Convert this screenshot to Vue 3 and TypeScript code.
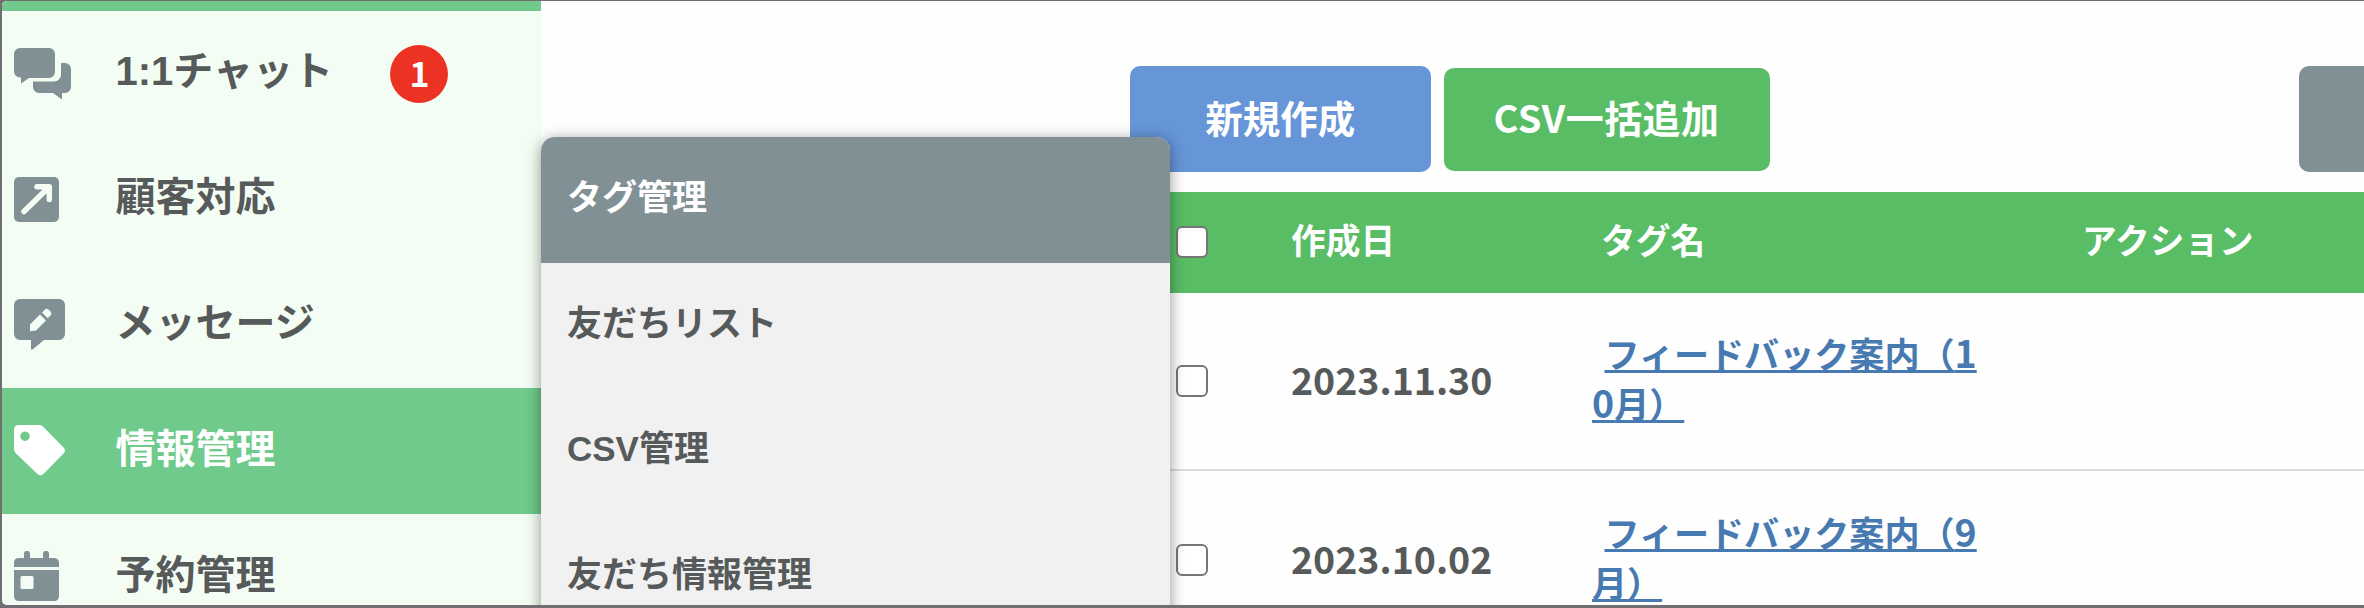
<script setup lang="ts">
type IconName = 'chat' | 'arrow' | 'message' | 'tag' | 'calendar'

interface NavItem {
  icon: IconName
  label: string
  badge?: number
  active?: boolean
}

interface TagRow {
  date: string
  // runs of Japanese text and larger-set numerals
  name: { text: string; digit?: boolean }[]
}

const nav: NavItem[] = [
  { icon: 'chat', label: '1:1チャット', badge: 1 },
  { icon: 'arrow', label: '顧客対応' },
  { icon: 'message', label: 'メッセージ' },
  { icon: 'tag', label: '情報管理', active: true },
  { icon: 'calendar', label: '予約管理' },
]

const submenu: string[] = ['タグ管理', '友だちリスト', 'CSV管理', '友だち情報管理']

const rows: TagRow[] = [
  { date: '2023.11.30', name: [{ text: 'フィードバック案内（' }, { text: '10', digit: true }, { text: '月）' }] },
  { date: '2023.10.02', name: [{ text: 'フィードバック案内（' }, { text: '9', digit: true }, { text: '月）' }] },
]
</script>

<template>
  <div class="frame">
    <div class="app">
      <aside class="sidebar">
        <div class="strip"></div>
        <nav>
          <a v-for="item in nav" :key="item.label" class="nav-item" :class="{ active: item.active }">
            <span class="icon">
              <svg v-if="item.icon === 'chat'" width="58" height="52" viewBox="0 0 58 52">
                <path d="M47 15h4a6 6 0 0 1 6 6v18a6 6 0 0 1-6 6h-3v6.500l-9-6.500H25a6 6 0 0 1-6-6v-5.500h21a7 7 0 0 0 7-7z" />
                <path d="M6 0h29a6 6 0 0 1 6 6v18a6 6 0 0 1-6 6H15L7 35.500V29.500H6A6 6 0 0 1 0 23.500V6a6 6 0 0 1 6-6z" />
              </svg>
              <svg v-else-if="item.icon === 'arrow'" width="46" height="46" viewBox="0 0 46 46">
                <rect width="45" height="45" rx="5" />
                <path class="knock" d="M10 34.500 33 12M23 9.800h12.300v12.700" />
                <path class="knock-fill" d="M27 9h9v9z" />
              </svg>
              <svg v-else-if="item.icon === 'message'" width="52" height="52" viewBox="0 0 52 52">
                <path d="M6 0h39a6 6 0 0 1 6 6v29a6 6 0 0 1-6 6H30L18.500 50.500q-1.500 1-1.500-1V41H6a6 6 0 0 1-6-6V6a6 6 0 0 1 6-6z" />
                <path class="knock-fill" d="M16 25.500 26 15.500l6 6L22 31.500l-6 .7zM28 13.500l3-3q2-1.500 4 .5l1.500 1.500q1.500 2 0 4l-2.800 2.800z" />
              </svg>
              <svg v-else-if="item.icon === 'tag'" width="52" height="52" viewBox="0 0 52 52">
                <path fill-rule="evenodd" d="M5 0h20q2.500 0 4 1.500L50 23q2 2.500 0 5L29.500 49q-3 2.500-6 0L1.500 28Q0 26.500 0 24V5q0-5 5-5zM11 6.500a4.700 4.700 0 1 0 .01 0z" />
              </svg>
              <svg v-else width="46" height="52" viewBox="0 0 46 52">
                <path d="M10 8V2.500Q10 0 12 0h2q2 0 2 2.500V7h13V2.500Q29 0 31 0h2q2 0 2 2.500V7h4.500Q45 7 45 12v4H0v-4Q0 7 5 7h5z" />
                <path fill-rule="evenodd" d="M0 19h45v26q0 5-5 5H5q-5 0-5-5zM8 25q-1.500 0-1.500 1.500v10Q6.500 38 8 38h10q1.500 0 1.500-1.500v-10Q19.500 25 18 25z" />
              </svg>
            </span>
            <span class="label">{{ item.label }}</span>
            <span v-if="item.badge" class="badge">{{ item.badge }}</span>
          </a>
        </nav>
        <ul class="submenu">
          <li v-for="(label, i) in submenu" :key="label" :class="{ current: i === 0 }">{{ label }}</li>
        </ul>
      </aside>

      <main class="content">
        <div class="toolbar">
          <button class="btn create">新規作成</button>
          <button class="btn csv">CSV一括追加</button>
          <button class="btn extra"></button>
        </div>
        <section class="table">
          <div class="row head">
            <span class="check"></span>
            <span>作成日</span>
            <span class="head-name">タグ名</span>
            <span>アクション</span>
          </div>
          <div v-for="row in rows" :key="row.date" class="row body">
            <span class="check"></span>
            <span class="date">{{ row.date }}</span>
            <span class="name"><a><span v-for="(part, i) in row.name" :key="i" :class="{ digit: part.digit }">{{ part.text }}</span></a></span>
          </div>
        </section>
      </main>
    </div>
  </div>
</template>

<style>
body {
  background: #706e70;
}
</style>

<style scoped>
.frame {
  box-sizing: border-box;
  width: 2364px;
  height: 608px;
  padding: 1px 0 3px 2px;
  overflow: hidden;
  background: #706e70;
  font-family: "Liberation Sans", "Noto Sans CJK JP", sans-serif;
  font-weight: 700;
  color: #565a5a;
}
.app {
  display: flex;
  height: 604px;
  overflow: hidden;
  border-radius: 5px 0 0 5px;
  background: #fefefe;
}
.sidebar {
  position: relative;
  z-index: 1;
  flex: 0 0 539px;
  background: #f4fdf3;
}
.strip {
  height: 10px;
  background: #6fca8b;
}
.nav-item {
  display: flex;
  align-items: center;
  height: 125.8px;
  padding-left: 12px;
  font-size: 40px;
  line-height: 60px;
}
.nav-item.active {
  background: #6fca8b;
  color: #fff;
}
.icon {
  width: 101.5px;
  line-height: 0;
}
.icon svg {
  fill: #819094;
}
.active .icon svg {
  fill: #fff;
}
.icon .knock {
  fill: none;
  stroke: #f4fdf3;
  stroke-width: 5.5;
  stroke-linecap: round;
  stroke-linejoin: round;
}
.icon .knock-fill {
  fill: #f4fdf3;
}
.label {
  padding-bottom: 5px;
}
.badge {
  width: 58px;
  height: 58px;
  margin-left: 57.5px;
  border-radius: 50%;
  background: #eb3223;
  color: #fff;
  font: 700 34px/56px "Noto Sans CJK JP", sans-serif;
  text-align: center;
}
.submenu {
  position: absolute;
  top: 136px;
  left: 539px;
  width: 629px;
  height: 520px;
  margin: 0;
  padding: 0;
  list-style: none;
  border-radius: 14px 14px 0 0;
  background: #f1f1f1;
  box-shadow: 0 3px 15px rgba(0, 0, 0, 0.42);
  font-size: 35px;
}
.submenu li {
  box-sizing: border-box;
  height: 125.6px;
  padding-left: 26px;
  line-height: 121px;
}
.submenu .current {
  border-radius: 14px 14px 0 0;
  background: #819094;
  color: #fff;
}
.content {
  flex: 1;
  min-width: 0;
  font-family: "Noto Sans CJK JP", sans-serif;
}
.toolbar {
  display: flex;
  align-items: center;
  height: 106px;
  margin: 65px 0 20px 588.5px;
}
.btn {
  flex: none;
  height: 106px;
  padding: 0 0 5px;
  border: 0;
  border-radius: 10px;
  color: #fff;
  font: 700 37.5px/101px "Noto Sans CJK JP", sans-serif;
}
.create {
  width: 301.5px;
  background: #6695d8;
}
.csv {
  width: 326px;
  height: 103px;
  margin-left: 12.5px;
  font-size: 38px;
  line-height: 98px;
  letter-spacing: 0.4px;
  background: #58bd65;
}
.extra {
  width: 120px;
  margin-left: auto;
  margin-right: -55px;
  background: #819094;
}
.row {
  display: grid;
  grid-template-columns: 115.5px 301px 490px auto;
  align-items: center;
  padding-left: 634.5px;
}
.head {
  height: 100.5px;
  background: #58bd65;
  color: #fff;
  font-size: 34.7px;
  line-height: 50px;
}
.head > span:not(.check) {
  padding-bottom: 6px;
}
.head-name {
  padding-left: 9px;
}
.body {
  box-sizing: border-box;
  height: 178.7px;
  border-bottom: 2px solid #dcdcdc;
}
.check {
  box-sizing: border-box;
  width: 32px;
  height: 32px;
  border: 2.5px solid #767676;
  border-radius: 6px;
  background: #fff;
}
.date {
  padding-bottom: 4px;
  font-size: 37.5px;
  line-height: 50px;
}
.name {
  width: 392px;
  padding-bottom: 5px;
  font-size: 35.1px;
  line-height: 50.5px;
  word-break: break-all;
}
.name a {
  margin-left: 12.5px;
  color: #487ab2;
  text-decoration: underline;
  text-decoration-thickness: 2.5px;
}
.name .digit {
  font-size: 37.5px;
  line-height: 1;
}
</style>
